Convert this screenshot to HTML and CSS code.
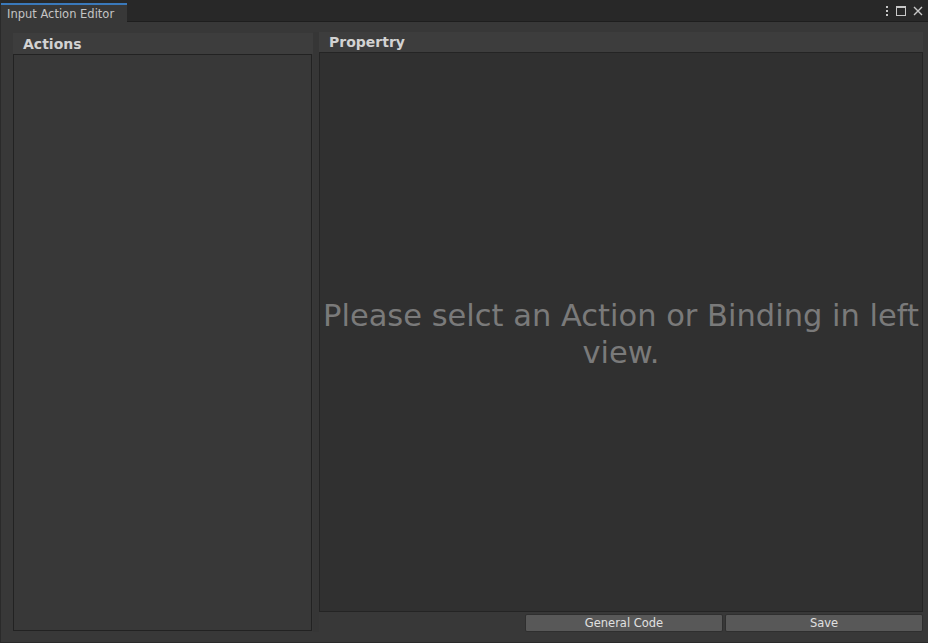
FILE: index.html
```html
<!DOCTYPE html>
<html>
<head>
<meta charset="utf-8">
<link rel="stylesheet" href="styles.css">
</head>
<body>
<div class="window">
  <div class="titlebar">
    <div class="tab">Input Action Editor</div>
    <div class="spacer"></div>
    <div class="winicons">
      <svg width="4" height="10" viewBox="0 0 4 10"><rect x="1" y="0" width="2" height="2" fill="#c8c8c8"/><rect x="1" y="4" width="2" height="2" fill="#c8c8c8"/><rect x="1" y="8" width="2" height="2" fill="#c8c8c8"/></svg>
      <svg width="10" height="10" viewBox="0 0 10 10"><rect x="0.5" y="0.5" width="9" height="9" fill="none" stroke="#c8c8c8"/><rect x="0" y="0" width="10" height="2" fill="#c8c8c8"/></svg>
      <svg width="10" height="10" viewBox="0 0 10 10"><path d="M1 1 L9 9 M9 1 L1 9" stroke="#c8c8c8" stroke-width="1.4"/></svg>
    </div>
  </div>
  <div class="content">
    <div class="left">
      <div class="panel-head left-head">Actions</div>
      <div class="list"></div>
    </div>
    <div class="divider"></div>
    <div class="right">
      <div class="panel-head right-head">Propertry</div>
      <div class="prop">
        <div class="msg">Please selct an Action or Binding in left view.</div>
      </div>
      <div class="buttons">
        <button class="btn">General Code</button>
        <button class="btn">Save</button>
      </div>
    </div>
  </div>
</div>
</body>
</html>
```

FILE: styles.css
```css
html, body {
  margin: 0;
  padding: 0;
  width: 928px;
  height: 643px;
  overflow: hidden;
  background: #383838;
  font-family: "DejaVu Sans", Verdana, sans-serif;
}
.window {
  width: 928px;
  height: 643px;
  display: flex;
  flex-direction: column;
  border-left: 1px solid #2a2a2a;
  box-sizing: border-box;
  border-bottom: 1px solid #2a2a2a;
}
.titlebar {
  height: 22px;
  background: #282828;
  border-bottom: 1px solid #1e1e1e;
  box-sizing: border-box;
  display: flex;
  align-items: flex-end;
  flex: none;
}
.tab {
  height: 19px;
  width: 126px;
  box-sizing: border-box;
  border-top: 2px solid #3a79bb;
  background: #383838;
  color: #c4c4c4;
  font-size: 11.5px;
  padding-left: 6px;
  line-height: 18px;
  margin-bottom: -1px;
  white-space: nowrap;
}
.spacer { flex: 1; }
.winicons {
  display: flex;
  align-items: center;
  gap: 7px;
  height: 22px;
  padding-right: 5px;
  align-self: flex-start;
}
.content {
  flex: 1;
  display: flex;
  padding: 10px 5px 10px 12px;
}
.left {
  width: 300px;
  display: flex;
  flex-direction: column;
  padding: 1px 0 1px 0;
}
.panel-head {
  height: 21px;
  background: #3d3d3d;
  color: #d2d2d2;
  font-weight: bold;
  font-size: 14px;
  line-height: 21px;
  padding-left: 10px;
  flex: none;
}
.left-head {
  line-height: 23px;
}
.list {
  flex: 1;
  border: 1px solid #222;
  background: #383838;
  margin-right: 1px;
}
.divider {
  width: 6px;
  background: #363636;
}
.right {
  flex: 1;
  display: flex;
  flex-direction: column;
}
.right-head {
  height: 20px;
  line-height: 20px;
}
.prop {
  height: 560px;
  background: #303030;
  border: 1px solid #242424;
  box-sizing: border-box;
  display: flex;
  align-items: center;
  justify-content: center;
  padding-top: 4px;
}
.msg {
  color: #7a7a7a;
  font-size: 30.5px;
  line-height: 37px;
  text-align: center;
  padding: 0 1px;
}
.buttons {
  display: flex;
  justify-content: flex-end;
  gap: 2px;
  padding-top: 2px;
}
.btn {
  width: 198px;
  height: 18px;
  background: #585858;
  border: 1px solid #2f2f2f;
  border-radius: 2px;
  color: #e0e0e0;
  font-family: "DejaVu Sans", Verdana, sans-serif;
  font-size: 11.5px;
  padding: 0;
  line-height: 16px;
}
```
